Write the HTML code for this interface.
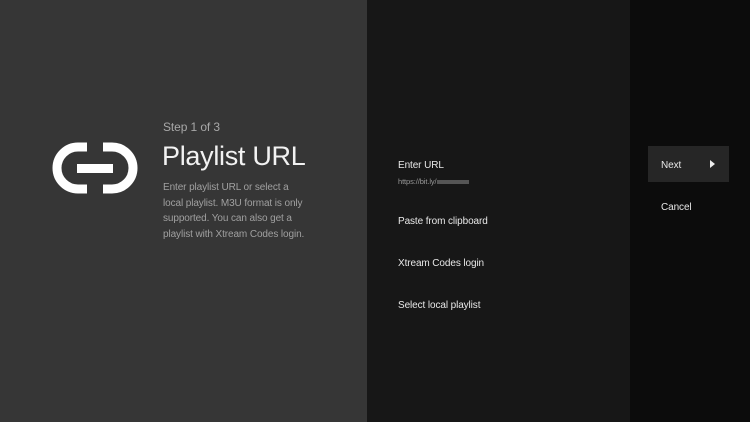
<html><head><style>
body{margin:0;width:750px;height:422px;overflow:hidden;background:#0c0c0c;font-family:"Liberation Sans",sans-serif;position:relative}
.l{position:absolute;left:0;top:0;width:367px;height:422px;background:#363636}
.m{position:absolute;left:367px;top:0;width:263px;height:422px;background:#171717}
.r{position:absolute;left:630px;top:0;width:120px;height:422px;background:#0c0c0c}
.t{position:absolute;color:#e8e8e8;font-size:10px;letter-spacing:-0.1px}
</style></head><body>
<div class="l"></div><div class="m"></div><div class="r"></div>
<svg style="position:absolute;left:50px;top:140px" width="90" height="56" viewBox="0 0 90 56">
<path d="M37 7 H28 A21 21 0 0 0 28 49 H37" fill="none" stroke="#fff" stroke-width="9"/>
<path d="M53 7 H62 A21 21 0 0 1 62 49 H53" fill="none" stroke="#fff" stroke-width="9"/>
<rect x="27" y="24" width="36" height="9" fill="#fff"/>
</svg>
<div class="t" style="left:163px;top:120px;font-size:12px;color:#a8a8a8">Step 1 of 3</div>
<div class="t" style="left:162px;top:141px;font-size:27px;color:#f2f2f2;letter-spacing:-0.3px">Playlist URL</div>
<div class="t" style="left:163px;top:180px;font-size:10px;line-height:15.5px;color:#a0a0a0;width:142px">Enter playlist URL or select a local playlist. M3U format is only supported. You can also get a playlist with Xtream Codes login.</div>
<div class="t" style="left:398px;top:160px">Enter URL</div>
<div class="t" style="left:398px;top:177px;font-size:7.5px;color:#999">https://bit.ly/<span style="display:inline-block;width:32px;height:4px;background:#555;vertical-align:middle"></span></div>
<div class="t" style="left:398px;top:216px">Paste from clipboard</div>
<div class="t" style="left:398px;top:258px">Xtream Codes login</div>
<div class="t" style="left:398px;top:300px">Select local playlist</div>
<div style="position:absolute;left:648px;top:146px;width:81px;height:36px;background:#262626"></div>
<div class="t" style="left:661px;top:160px">Next</div>
<div style="position:absolute;left:710px;top:160px;width:0;height:0;border-left:5px solid #eee;border-top:4px solid transparent;border-bottom:4px solid transparent"></div>
<div class="t" style="left:661px;top:202px">Cancel</div>
</body></html>
